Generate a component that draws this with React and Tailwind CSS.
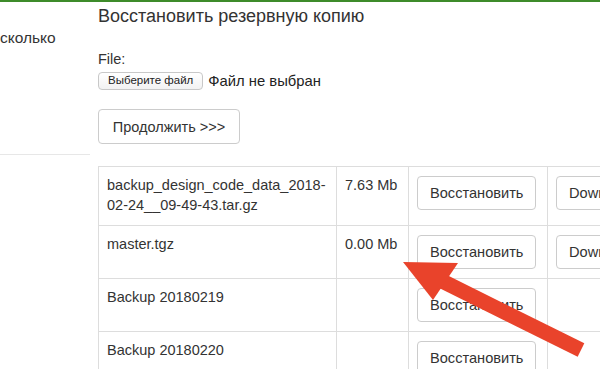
import React from 'react'

const rows = [
  { name: 'backup_design_code_data_2018-02-24__09-49-43.tar.gz', size: '7.63 Mb', download: true },
  { name: 'master.tgz', size: '0.00 Mb', download: true },
  { name: 'Backup 20180219', size: '', download: false },
  { name: 'Backup 20180220', size: '', download: false },
]

function Btn({ children }){
  return (
    <button className="h-[34px] px-3 border border-[#ccc] rounded-[4px] bg-white text-[14.6px] leading-5 text-[#333] whitespace-nowrap">
      {children}
    </button>
  )
}

export default function App(){
  return (
    <div className="relative w-[600px] h-[369px] overflow-hidden bg-white font-['Liberation_Sans',Arial,sans-serif] text-[14.5px] leading-5 text-[#333]">
      <div className="h-[2px] bg-[#3d8b2a]" />
      <div className="flex">
        <aside className="w-[90px] shrink-0">
          <div className="h-[153px] pt-[26px] border-b border-[#e7e7e7] text-[15.5px] whitespace-nowrap">сколько</div>
        </aside>
        <main className="flex-1 min-w-0 pl-2 overflow-hidden">
          <h3 className="text-[18px] leading-[26px] mt-[1px]">Восстановить резервную копию</h3>
          <div className="mt-[20px]">File:</div>
          <div className="flex items-center gap-[5px] mt-[2px]">
            <span className="h-[18px] px-[9px] flex items-center border border-[#c8c8c8] rounded-[4px] bg-gradient-to-b from-white to-[#f2f2f2] text-[11.5px] leading-none text-[#222]">Выберите файл</span>
            <span className="text-[14.8px] text-[#222]">Файл не выбран</span>
          </div>
          <button className="mt-[18px] h-[35px] w-[142px] border border-[#ccc] rounded-[4px] bg-white text-[14.5px] text-[#333]">Продолжить &gt;&gt;&gt;</button>
          <table className="mt-[22px] border-collapse border border-[#ddd] table-fixed w-[620px]">
            <colgroup>
              <col className="w-[238px]" />
              <col className="w-[72px]" />
              <col className="w-[139px]" />
              <col className="w-[171px]" />
            </colgroup>
            <tbody>
              {rows.map(r => (
                <tr key={r.name}>
                  <td className="border border-[#ddd] px-2 pt-[8px] pb-[10px] align-top break-words">{r.name}</td>
                  <td className="border border-[#ddd] px-2 pt-[8px] pb-[10px] align-top whitespace-nowrap">{r.size}</td>
                  <td className="border border-[#ddd] px-2 py-[9px] align-top"><Btn>Восстановить</Btn></td>
                  <td className="border border-[#ddd] px-2 py-[9px] align-top">{r.download && <Btn>Download</Btn>}</td>
                </tr>
              ))}
            </tbody>
          </table>
        </main>
      </div>
      <svg className="absolute inset-0 pointer-events-none" width="600" height="369" viewBox="0 0 600 369">
        <line x1="440" y1="280" x2="581" y2="350" stroke="#e9432b" strokeWidth="15" />
        <polygon points="403,262 458,263 433,300" fill="#e9432b" />
      </svg>
    </div>
  )
}
